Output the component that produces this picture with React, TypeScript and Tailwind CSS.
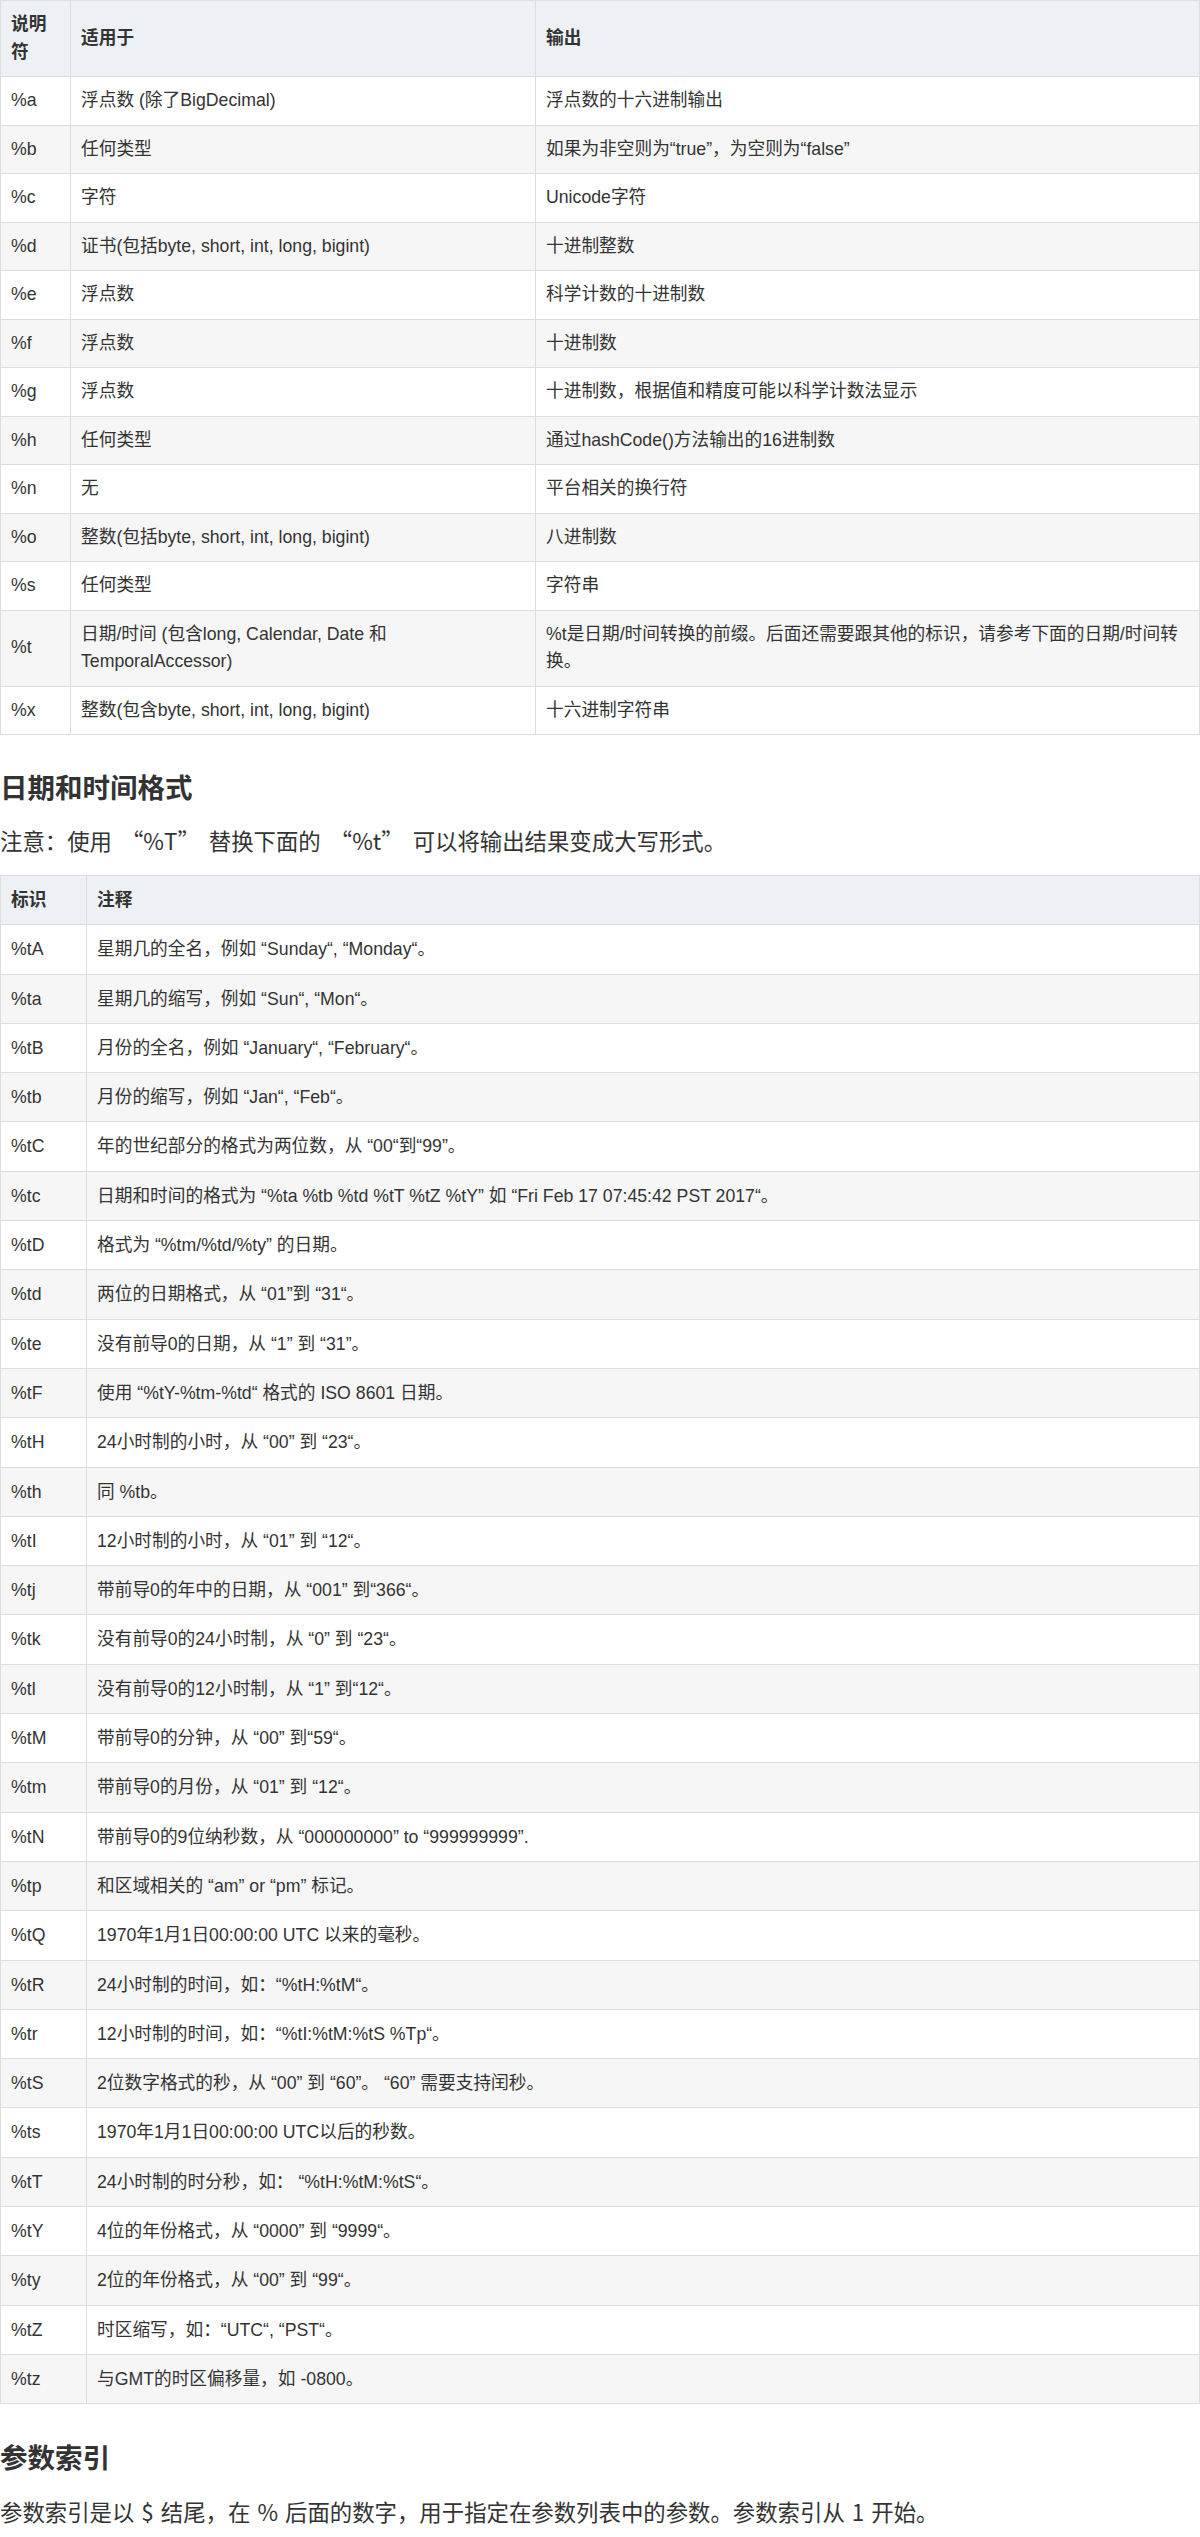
import React from "react";

const t1: [string, string, string][] = [
  ["%a", "浮点数 (除了BigDecimal)", "浮点数的十六进制输出"],
  ["%b", "任何类型", "如果为非空则为“true”，为空则为“false”"],
  ["%c", "字符", "Unicode字符"],
  ["%d", "证书(包括byte, short, int, long, bigint)", "十进制整数"],
  ["%e", "浮点数", "科学计数的十进制数"],
  ["%f", "浮点数", "十进制数"],
  ["%g", "浮点数", "十进制数，根据值和精度可能以科学计数法显示"],
  ["%h", "任何类型", "通过hashCode()方法输出的16进制数"],
  ["%n", "无", "平台相关的换行符"],
  ["%o", "整数(包括byte, short, int, long, bigint)", "八进制数"],
  ["%s", "任何类型", "字符串"],
  ["%t", "日期/时间 (包含long, Calendar, Date 和 TemporalAccessor)", "%t是日期/时间转换的前缀。后面还需要跟其他的标识，请参考下面的日期/时间转换。"],
  ["%x", "整数(包含byte, short, int, long, bigint)", "十六进制字符串"],
];

const t2: [string, string][] = [
  ["%tA", "星期几的全名，例如 “Sunday“, “Monday“。"],
  ["%ta", "星期几的缩写，例如 “Sun“, “Mon“。"],
  ["%tB", "月份的全名，例如 “January“, “February“。"],
  ["%tb", "月份的缩写，例如 “Jan“, “Feb“。"],
  ["%tC", "年的世纪部分的格式为两位数，从 “00“到“99”。"],
  ["%tc", "日期和时间的格式为 “%ta %tb %td %tT %tZ %tY” 如 “Fri Feb 17 07:45:42 PST 2017“。"],
  ["%tD", "格式为 “%tm/%td/%ty” 的日期。"],
  ["%td", "两位的日期格式，从 “01”到 “31“。"],
  ["%te", "没有前导0的日期，从 “1” 到 “31”。"],
  ["%tF", "使用 “%tY-%tm-%td“ 格式的 ISO 8601 日期。"],
  ["%tH", "24小时制的小时，从 “00” 到 “23“。"],
  ["%th", "同 %tb。"],
  ["%tI", "12小时制的小时，从 “01” 到 “12“。"],
  ["%tj", "带前导0的年中的日期，从 “001” 到“366“。"],
  ["%tk", "没有前导0的24小时制，从 “0” 到 “23“。"],
  ["%tl", "没有前导0的12小时制，从 “1” 到“12“。"],
  ["%tM", "带前导0的分钟，从 “00” 到“59“。"],
  ["%tm", "带前导0的月份，从 “01” 到 “12“。"],
  ["%tN", "带前导0的9位纳秒数，从 “000000000” to “999999999”."],
  ["%tp", "和区域相关的 “am” or “pm” 标记。"],
  ["%tQ", "1970年1月1日00:00:00 UTC 以来的毫秒。"],
  ["%tR", "24小时制的时间，如：“%tH:%tM“。"],
  ["%tr", "12小时制的时间，如：“%tI:%tM:%tS %Tp“。"],
  ["%tS", "2位数字格式的秒，从 “00” 到 “60”。 “60” 需要支持闰秒。"],
  ["%ts", "1970年1月1日00:00:00 UTC以后的秒数。"],
  ["%tT", "24小时制的时分秒，如： “%tH:%tM:%tS“。"],
  ["%tY", "4位的年份格式，从 “0000” 到 “9999“。"],
  ["%ty", "2位的年份格式，从 “00” 到 “99“。"],
  ["%tZ", "时区缩写，如：“UTC“, “PST“。"],
  ["%tz", "与GMT的时区偏移量，如 -0800。"],
];

const font = { fontFamily: '"Liberation Sans", "Noto Sans CJK SC", sans-serif' };
const cjk = { fontFamily: '"Noto Sans CJK SC", "Liberation Sans", sans-serif' };

const cell = "border border-[#ddd] px-[10px] py-[10px] align-middle";
const head = "border border-[#ddd] px-[10px] py-[10px] text-left align-middle font-bold";

export default function App() {
  return (
    <div className="w-[1200px] bg-white text-[#333]" style={font}>
      <table className="w-[1200px] border-collapse table-fixed text-[17.7px] leading-[27.5px]">
        <colgroup>
          <col className="w-[70px]" />
          <col className="w-[465px]" />
          <col />
        </colgroup>
        <thead>
          <tr className="bg-[#edf1f5]">
            <th className={head}>说明符</th>
            <th className={head}>适用于</th>
            <th className={head}>输出</th>
          </tr>
        </thead>
        <tbody>
          {t1.map((r, i) => (
            <tr key={r[0]} className={i % 2 === 1 ? "bg-[#f6f6f6]" : "bg-white"}>
              <td className={cell}>{r[0]}</td>
              <td className={cell}>{r[1]}</td>
              <td className={cell}>{r[2]}</td>
            </tr>
          ))}
        </tbody>
      </table>

      <h2 className="mt-[31px] text-[27.5px] leading-[40px] font-bold text-[#333]" style={cjk}>日期和时间格式</h2>
      <p className="mt-[18px] text-[22.4px] leading-[32px] [word-spacing:4px]" style={cjk}>注意：使用 “%T” 替换下面的 “%t” 可以将输出结果变成大写形式。</p>

      <table className="mt-[19px] w-[1200px] border-collapse table-fixed text-[17.7px] leading-[28.3px]">
        <colgroup>
          <col className="w-[86px]" />
          <col />
        </colgroup>
        <thead>
          <tr className="bg-[#edf1f5]">
            <th className={head}>标识</th>
            <th className={head}>注释</th>
          </tr>
        </thead>
        <tbody>
          {t2.map((r, i) => (
            <tr key={r[0]} className={i % 2 === 1 ? "bg-[#f6f6f6]" : "bg-white"}>
              <td className={cell}>{r[0]}</td>
              <td className={cell}>{r[1]}</td>
            </tr>
          ))}
        </tbody>
      </table>

      <h2 className="mt-[32px] text-[27.5px] leading-[40px] font-bold text-[#333]" style={cjk}>参数索引</h2>
      <p className="mt-[19px] pb-[12px] text-[22.4px] leading-[32px] [word-spacing:2px]" style={cjk}>参数索引是以 $ 结尾，在 % 后面的数字，用于指定在参数列表中的参数。参数索引从 1 开始。</p>
    </div>
  );
}
